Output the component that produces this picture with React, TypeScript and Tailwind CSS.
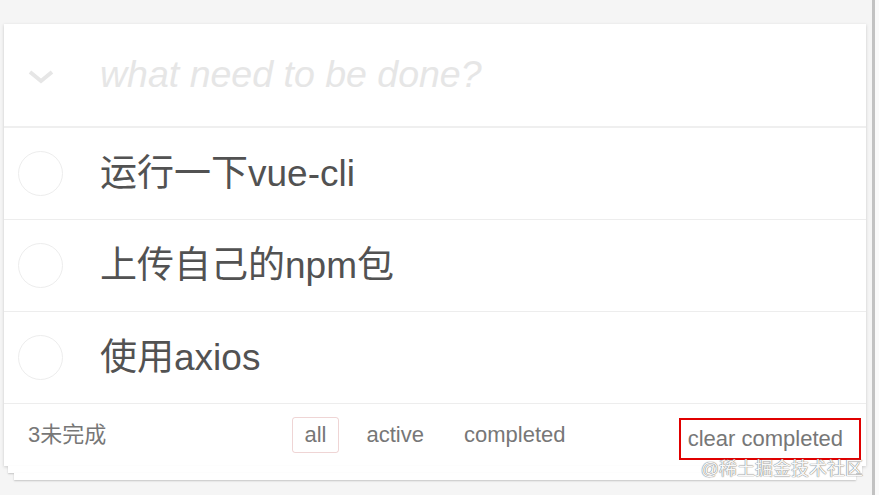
import React from 'react';

const todos = ['运行一下vue-cli', '上传自己的npm包', '使用axios'];

const font = 'font-["Liberation_Sans","Noto_Sans_CJK_SC",sans-serif]';

export default function App() {
  return (
    <div className={`relative w-[879px] h-[495px] flex bg-[#f5f5f5] overflow-hidden ${font}`}>
      <div className="flex-1 pt-[24px] pl-[4px] pr-[6px]">
        <div className="bg-white shadow-[0_1px_3px_rgba(0,0,0,0.18)]">
          {/* new todo input */}
          <div className="h-[104px] flex items-center border-b-2 border-[#efefef]">
            <div className="w-[96px] pl-[24px]">
              <svg width="26" height="14" viewBox="0 0 26 14" className="mt-[4px]">
                <polyline points="2,2 13,11 24,2" fill="none" stroke="#e6e6e6" strokeWidth="4" />
              </svg>
            </div>
            <span className="text-[37.5px] italic text-[#e6e6e6] leading-none">what need to be done?</span>
          </div>

          {todos.map((t) => (
            <div key={t} className="h-[92px] flex items-center border-b border-[#ededed]">
              <div className="w-[96px] pl-[14px]">
                <div className="w-[45px] h-[45px] rounded-full border border-[#ededed]" />
              </div>
              <span className="text-[37px] text-[#525252] leading-none">{t}</span>
            </div>
          ))}

          {/* footer */}
          <div className="h-[62px] grid grid-cols-[1fr_auto_1fr] items-center px-[5px] text-[22px] text-[#777] leading-none">
            <span className="pl-[19px]">3未完成</span>
            <div className="flex gap-4">
              <span className="px-[11px] py-[6px] border border-[rgba(175,47,47,0.2)] rounded-[3px]">all</span>
              <span className="px-[11px] py-[6px] border border-transparent">active</span>
              <span className="px-[11px] py-[6px] border border-transparent">completed</span>
            </div>
            <div className="flex justify-end">
              <span className="pl-[7px] pr-[16px] py-[8px] border-2 border-[#e00000] mt-[7px]">clear completed</span>
            </div>
          </div>
        </div>
        <div className="mx-[4px] h-[7px] bg-white shadow-[0_1px_2px_rgba(0,0,0,0.2)]" />
        <div className="mx-[10px] h-[7px] bg-white shadow-[0_1px_2px_rgba(0,0,0,0.2)]" />
      </div>
      <div className="w-[3px] bg-[#c2c2c2]" />
      <div className="w-[4px] bg-[#fafafa]" />

      <span className="absolute right-[16px] top-[460px] text-[18px] leading-none text-[#f8f8f8] [text-shadow:0_0_1px_#777,0_0_1px_#777]">
        @稀土掘金技术社区
      </span>
    </div>
  );
}
